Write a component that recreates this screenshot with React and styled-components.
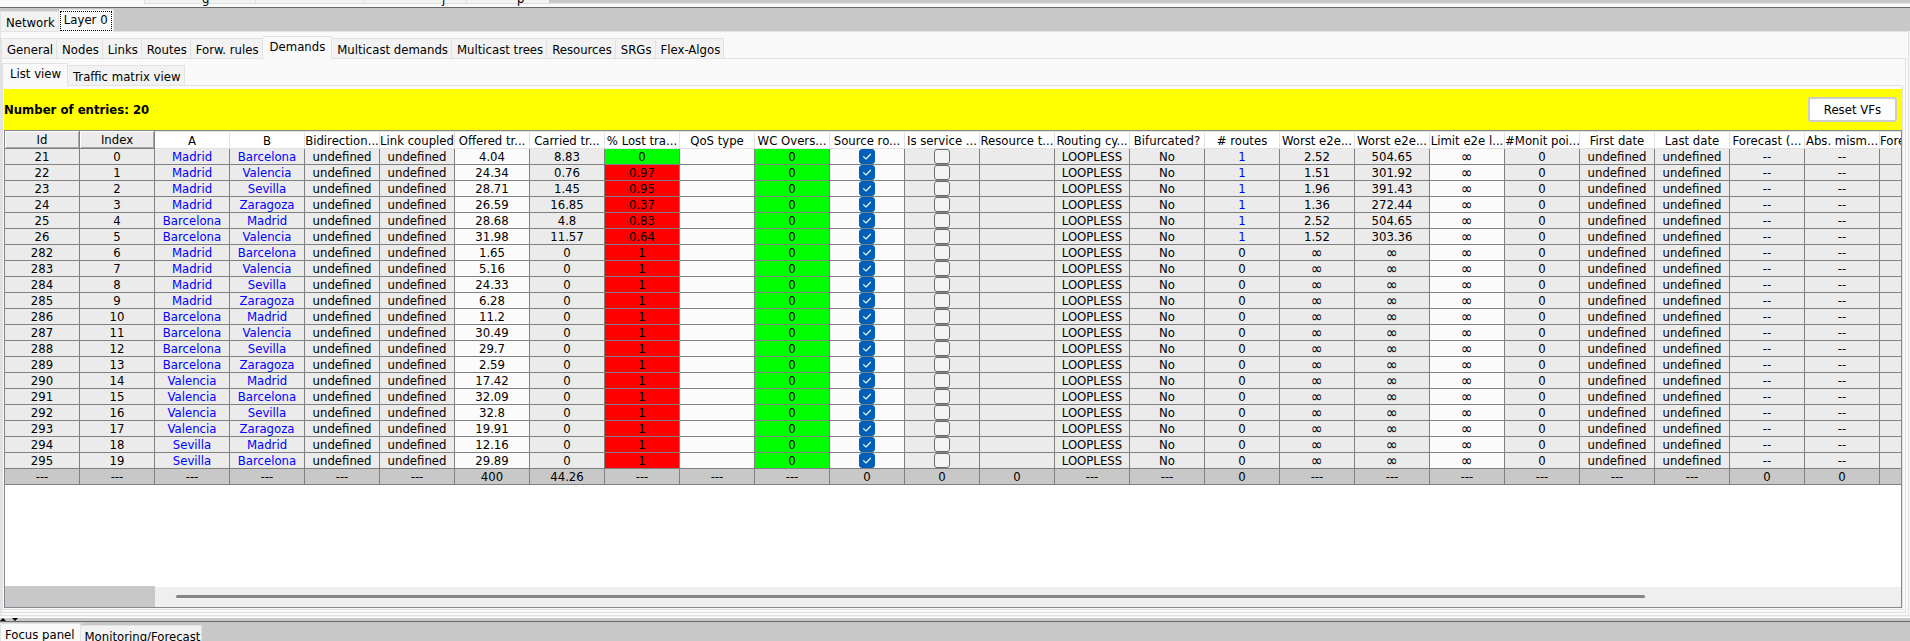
import React from "react";
import styled, { createGlobalStyle } from "styled-components";

const GlobalStyle = createGlobalStyle`
  * { box-sizing: border-box; }
  body {
    margin: 0;
    background: #f9f9f9;
    color: #000;
    font: 13px/16px "DejaVu Sans Condensed", "DejaVu Sans", sans-serif;
  }
  button, input { font: inherit; color: inherit; margin: 0; }
`;

const Window = styled.div`
  display: flex;
  flex-direction: column;
  height: 100vh;
  overflow: hidden;
`;

/* Lower edge of the toolbar tabs, above the split pane */
const UpperStrip = styled.div`
  display: flex;
  flex: none;
  height: 7px;
  padding-bottom: 3px;
  overflow: hidden;
`;
const UpperLead = styled.div`
  width: 144px;
`;
const UpperTab = styled.div`
  display: flex;
  align-items: flex-end;
  width: ${(p) => p.$width}px;
  padding-left: ${(p) => p.$indent || 0}px;
  line-height: 8px;
  background: #f2f2f2;
  border: solid #e0e0e0;
  border-width: 0 0 1px 1px;
`;
const UpperRest = styled.div`
  flex: 1;
  background: #c8c8c8;
  border-bottom: 1px solid #e5e5e5;
`;

const TabRow = styled.div`
  display: flex;
  flex: none;
  align-items: flex-end;
  position: relative;
  z-index: 1;
  height: ${(p) => (p.$outer ? 24 : 27)}px;
  margin-bottom: -1px;
`;
const Tab = styled.button`
  flex: none;
  height: ${(p) => (p.$active ? 23 : 20)}px;
  margin-bottom: ${(p) => (p.$active ? 0 : 1)}px;
  padding: ${(p) => (p.$active ? "0 6px 2px 7px" : "2px 3px 0 5px")};
  border: solid #e2e2e2;
  border-width: 1px 1px 0 ${(p) => (p.$first ? 1 : 0)}px;
  background: ${(p) => (p.$active ? "#f9f9f9" : "#f2f2f2")};
  white-space: nowrap;
`;
const FocusTab = styled(Tab)`
  padding: 0 1px;
`;
const FocusRing = styled.span`
  display: block;
  padding: 0 3px 2px;
  border: 1px dotted #000;
`;

const OuterArea = styled.div`
  display: flex;
  flex-direction: column;
  flex: 1;
  min-height: 0;
  border-top: 1px solid #6a6a6a;
  background: #c8c8c8;
`;
const Panel = styled.section`
  display: flex;
  flex-direction: column;
  flex: 1;
  min-height: 0;
  min-width: 0;
  margin: 0 ${(p) => (p.$outer ? 0 : 2)}px ${(p) => (p.$outer ? 0 : 2)}px 0;
  border: 1px solid #e2e2e2;
  background: #f9f9f9;
`;
const OuterFrame = styled.div`
  display: flex;
  flex: 1;
  min-height: 0;
  padding: 0 1px 1px 0;
  background: #f3f3f3;
`;
const ListPanel = styled(Panel)`
  padding: 3px 0 1px 1px;
`;

const EntriesBar = styled.header`
  display: flex;
  flex: none;
  align-items: center;
  justify-content: space-between;
  height: 41px;
  padding-right: 5px;
  background: #ff0;
`;
const EntriesCount = styled.strong`
  font-weight: bold;
`;
const ResetButton = styled.button`
  height: 25px;
  padding: 0 14px;
  border: 2px solid #ccc;
  border-radius: 3px;
  background: #fdfdfd;
`;

const TableFrame = styled.div`
  display: flex;
  flex-direction: column;
  flex: 1;
  min-height: 0;
  border: 1px solid #828790;
  background: #fff;
`;
const Viewport = styled.div`
  flex: 1;
  min-height: 0;
  overflow: hidden;
`;
const Grid = styled.table`
  width: 1950px;
  table-layout: fixed;
  border-collapse: separate;
  border-spacing: 0;
  text-align: center;
`;
const HeadCell = styled.th`
  height: 18px;
  padding: 1px 0 0;
  overflow: hidden;
  border: solid #e2e2e2;
  border-width: 1px 1px 1px 0;
  background: #fff;
  font-weight: normal;
  line-height: 15px;
  white-space: nowrap;
`;
const FixedHeadCell = styled(HeadCell)`
  padding: 0 0 1px;
  border: solid #808080;
  border-width: 0 1px 1px 0;
  background: #ebebeb;
  box-shadow: inset 1px 1px #fff, inset -1px -1px #a8a8a8;
`;
const tones = {
  locked: "#ebebeb",
  edit: "#fbfbfb",
  good: "#0f0",
  bad: "#f00",
  total: "#c8c8c8",
};
const Cell = styled.td`
  height: 16px;
  padding: 0;
  border: solid #808080;
  border-width: 0 1px 1px 0;
  background: ${(p) => tones[p.$tone]};
  color: ${(p) => (p.$link ? "#00f" : "#000")};
  line-height: 15px;
  white-space: nowrap;
`;
const Infinity = styled.span`
  display: block;
  height: 15px;
  font-size: 16px;
`;
const CheckWrap = styled.span`
  display: grid;
  justify-content: center;
  height: 15px;
  & > * { grid-area: 1 / 1; }
`;
const CheckBox = styled.input`
  appearance: none;
  width: 16px;
  height: 15px;
  border: 1px solid #6a6a6a;
  border-radius: 3px;
  background: #f4f4f4;
  &:checked { border-color: #005fb8; background: #005fb8; }
`;
const CheckMark = styled.svg`
  width: 16px;
  height: 15px;
  pointer-events: none;
`;

const ScrollRow = styled.div`
  display: flex;
  flex: none;
  height: 21px;
`;
const ScrollCorner = styled.div`
  width: 150px;
  background: #c8c8c8;
`;
const ScrollTrack = styled.div`
  display: grid;
  grid-template-columns: 21fr 1469fr 256fr;
  align-items: center;
  flex: 1;
  margin-top: 1px;
  padding-bottom: 2px;
  background: #efefef;
`;
const ScrollThumb = styled.div`
  grid-column: 2;
  height: 3px;
  border-radius: 2px;
  background: #858585;
`;

const Splitter = styled.div`
  display: flex;
  flex: none;
  height: 5px;
  border-top: 1px solid #fff;
  border-bottom: 1px solid #6a6a6a;
  background: #c8c8c8;
`;
const SplitArrows = styled.svg`
  width: 20px;
  height: 3px;
`;
const BottomTabs = styled.div`
  display: flex;
  flex: none;
  align-items: flex-start;
  height: 19px;
  padding-top: 1px;
  overflow: hidden;
  background: #c8c8c8;
`;
const BottomTab = styled(Tab)`
  height: 24px;
  margin: ${(p) => (p.$active ? 0 : 2)}px 0 0;
  padding: ${(p) => (p.$active ? "0 5px 2px 4px" : "0 1px 2px 4px")};
`;

const headers = [
  "Id", "Index", "A", "B", "Bidirection...", "Link coupled", "Offered tr...", "Carried tr...",
  "% Lost tra...", "QoS type", "WC Overs...", "Source ro...", "Is service ...", "Resource t...",
  "Routing cy...", "Bifurcated?", "# routes", "Worst e2e...", "Worst e2e...", "Limit e2e l...",
  "#Monit poi...", "First date", "Last date", "Forecast (...", "Abs. mism...", "Forecast er...",
];

/* id, A, B, offered, carried, lost, routes, worst latency, worst length */
const demands = [
  [21, "Madrid", "Barcelona", 4.04, 8.83, 0, 1, "2.52", "504.65"],
  [22, "Madrid", "Valencia", 24.34, 0.76, 0.97, 1, "1.51", "301.92"],
  [23, "Madrid", "Sevilla", 28.71, 1.45, 0.95, 1, "1.96", "391.43"],
  [24, "Madrid", "Zaragoza", 26.59, 16.85, 0.37, 1, "1.36", "272.44"],
  [25, "Barcelona", "Madrid", 28.68, 4.8, 0.83, 1, "2.52", "504.65"],
  [26, "Barcelona", "Valencia", 31.98, 11.57, 0.64, 1, "1.52", "303.36"],
  [282, "Madrid", "Barcelona", 1.65],
  [283, "Madrid", "Valencia", 5.16],
  [284, "Madrid", "Sevilla", 24.33],
  [285, "Madrid", "Zaragoza", 6.28],
  [286, "Barcelona", "Madrid", 11.2],
  [287, "Barcelona", "Valencia", 30.49],
  [288, "Barcelona", "Sevilla", 29.7],
  [289, "Barcelona", "Zaragoza", 2.59],
  [290, "Valencia", "Madrid", 17.42],
  [291, "Valencia", "Barcelona", 32.09],
  [292, "Valencia", "Sevilla", 32.8],
  [293, "Valencia", "Zaragoza", 19.91],
  [294, "Sevilla", "Madrid", 12.16],
  [295, "Sevilla", "Barcelona", 29.89],
];

const totals = [
  "---", "---", "---", "---", "---", "---", "400", "44.26", "---", "---", "---", "0", "0", "0",
  "---", "---", "0", "---", "---", "---", "---", "---", "---", "0", "0", "",
];

function Check({ on, label }) {
  return (
    <CheckWrap>
      <CheckBox type="checkbox" defaultChecked={on} aria-label={label} />
      {on && (
        <CheckMark viewBox="0 0 16 15" fill="none" stroke="#fff" strokeWidth="1.1">
          <path d="M4.2 7.4 L7 10 L11.8 5" />
        </CheckMark>
      )}
    </CheckWrap>
  );
}

function DemandRow({ demand, index }) {
  const [id, a, b, offered, carried = 0, lost = 1, routes = 0, latency, length] = demand;
  const unbounded = <Infinity>∞</Infinity>;
  return (
    <tr>
      <Cell $tone="locked">{id}</Cell>
      <Cell $tone="locked">{index}</Cell>
      <Cell $tone="locked" $link>{a}</Cell>
      <Cell $tone="locked" $link>{b}</Cell>
      <Cell $tone="locked">undefined</Cell>
      <Cell $tone="locked">undefined</Cell>
      <Cell $tone="edit">{offered}</Cell>
      <Cell $tone="locked">{carried}</Cell>
      <Cell $tone={lost ? "bad" : "good"}>{lost}</Cell>
      <Cell $tone="edit" />
      <Cell $tone="good">0</Cell>
      <Cell $tone="edit"><Check on label={`Source routing ${id}`} /></Cell>
      <Cell $tone="locked"><Check on={false} label={`Is service chain ${id}`} /></Cell>
      <Cell $tone="locked" />
      <Cell $tone="locked">LOOPLESS</Cell>
      <Cell $tone="locked">No</Cell>
      <Cell $tone="locked" $link={routes > 0}>{routes}</Cell>
      <Cell $tone="locked">{latency || unbounded}</Cell>
      <Cell $tone="locked">{length || unbounded}</Cell>
      <Cell $tone="edit">{unbounded}</Cell>
      <Cell $tone="locked">0</Cell>
      <Cell $tone="locked">undefined</Cell>
      <Cell $tone="locked">undefined</Cell>
      <Cell $tone="locked">--</Cell>
      <Cell $tone="locked">--</Cell>
      <Cell $tone="locked" />
    </tr>
  );
}

const layerTabs = [
  "General", "Nodes", "Links", "Routes", "Forw. rules", "Demands", "Multicast demands",
  "Multicast trees", "Resources", "SRGs", "Flex-Algos",
];

export default function App() {
  return (
    <Window>
      <GlobalStyle />
      <UpperStrip>
        <UpperLead />
        <UpperTab $width={111} $indent={57}>g</UpperTab>
        <UpperTab $width={109} />
        <UpperTab $width={102} $indent={77}>j</UpperTab>
        <UpperTab $width={83} $indent={50}>p</UpperTab>
        <UpperRest />
      </UpperStrip>
      <OuterArea>
        <TabRow $outer>
          <Tab $first>Network</Tab>
          <FocusTab $active><FocusRing>Layer 0</FocusRing></FocusTab>
        </TabRow>
        <OuterFrame>
          <Panel $outer>
            <TabRow>
              {layerTabs.map((name, i) => (
                <Tab key={name} $first={i === 0} $active={name === "Demands"}>{name}</Tab>
              ))}
            </TabRow>
            <Panel>
              <TabRow>
                <Tab $first $active>List view</Tab>
                <Tab>Traffic matrix view</Tab>
              </TabRow>
              <ListPanel>
                <EntriesBar>
                  <EntriesCount>Number of entries: 20</EntriesCount>
                  <ResetButton>Reset VFs</ResetButton>
                </EntriesBar>
                <TableFrame>
                  <Viewport>
                    <Grid>
                      <thead>
                        <tr>
                          {headers.map((name, i) =>
                            i < 2 ? (
                              <FixedHeadCell key={i}>{name}</FixedHeadCell>
                            ) : (
                              <HeadCell key={i}>{name}</HeadCell>
                            )
                          )}
                        </tr>
                      </thead>
                      <tbody>
                        {demands.map((d, i) => (
                          <DemandRow key={d[0]} demand={d} index={i} />
                        ))}
                      </tbody>
                      <tfoot>
                        <tr>
                          {totals.map((t, i) => (
                            <Cell key={i} $tone="total">{t}</Cell>
                          ))}
                        </tr>
                      </tfoot>
                    </Grid>
                  </Viewport>
                  <ScrollRow>
                    <ScrollCorner />
                    <ScrollTrack><ScrollThumb /></ScrollTrack>
                  </ScrollRow>
                </TableFrame>
              </ListPanel>
            </Panel>
          </Panel>
        </OuterFrame>
      </OuterArea>
      <Splitter>
        <SplitArrows viewBox="0 0 20 3">
          <path d="M0 3 L3 0 L6 3 Z M12 0 L18 0 L15 3 Z" />
        </SplitArrows>
      </Splitter>
      <BottomTabs>
        <BottomTab $first $active>Focus panel</BottomTab>
        <BottomTab>Monitoring/Forecast</BottomTab>
      </BottomTabs>
    </Window>
  );
}
